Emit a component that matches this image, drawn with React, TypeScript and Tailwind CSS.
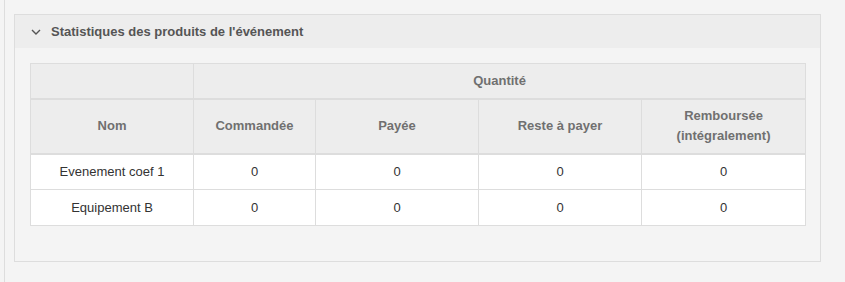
import React from 'react';

interface ProductRow {
  name: string;
  ordered: number;
  paid: number;
  remaining: number;
  refunded: number;
}

const rows: ProductRow[] = [
  { name: 'Evenement coef 1', ordered: 0, paid: 0, remaining: 0, refunded: 0 },
  { name: 'Equipement B', ordered: 0, paid: 0, remaining: 0, refunded: 0 },
];

function ChevronDown() {
  return (
    <svg className="w-[10px] h-[6px]" viewBox="0 0 10 6" fill="none" stroke="#555" strokeWidth={1.4}>
      <path d="M1 1l4 4 4-4" />
    </svg>
  );
}

function App() {
  const th = 'border border-[#dddddd] bg-[#ededed] text-[#707070] font-bold text-[13px] leading-[20px] text-center align-middle';
  const td = 'border border-[#dddddd] bg-white text-[#333] text-[13px] leading-[20px] text-center align-middle h-[36px]';

  return (
    <div className="min-h-[282px] bg-[#f4f4f4] pl-1 font-['Liberation_Sans',Arial,sans-serif]">
      <div className="min-h-[282px] border-l border-[#dddddd] pl-[9px] pr-[24px] pt-[14px]">
        {/* Event products panel */}
        <div className="border border-[#dddddd] bg-[#f4f4f4]">
          <div className="flex items-center h-[33px] bg-[#ededed] pl-[16px] gap-[10px]">
            <ChevronDown />
            <span className="text-[13px] font-bold text-[#555]">Statistiques des produits de l'événement</span>
          </div>
          <div className="px-[15px] pt-[15px] pb-[35px]">
            <table className="w-[775px] border-collapse table-fixed">
              <colgroup>
                <col className="w-[163px]" />
                <col className="w-[122px]" />
                <col className="w-[163px]" />
                <col className="w-[163px]" />
                <col className="w-[164px]" />
              </colgroup>
              <thead>
                <tr className="h-[35px]">
                  <th className={th}></th>
                  <th className={th} colSpan={4}>Quantité</th>
                </tr>
                <tr className="h-[55px] border-y-2 border-[#dddddd]">
                  <th className={`${th} border-y-2`}>Nom</th>
                  <th className={`${th} border-y-2`}>Commandée</th>
                  <th className={`${th} border-y-2`}>Payée</th>
                  <th className={`${th} border-y-2`}>Reste à payer</th>
                  <th className={`${th} border-y-2`}>
                    Remboursée
                    <br />
                    (intégralement)
                  </th>
                </tr>
              </thead>
              <tbody>
                {rows.map((row) => (
                  <tr key={row.name}>
                    <td className={td}>{row.name}</td>
                    <td className={td}>{row.ordered}</td>
                    <td className={td}>{row.paid}</td>
                    <td className={td}>{row.remaining}</td>
                    <td className={td}>{row.refunded}</td>
                  </tr>
                ))}
              </tbody>
            </table>
          </div>
        </div>
      </div>
    </div>
  );
}

export default App;
